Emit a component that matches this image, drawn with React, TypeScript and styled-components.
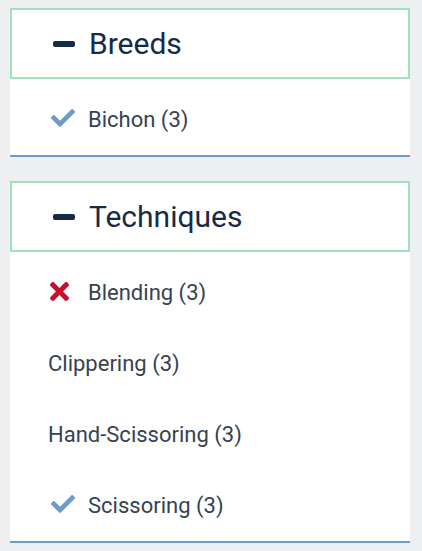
import React from 'react';
import styled, { createGlobalStyle } from 'styled-components';

const GlobalStyle = createGlobalStyle`
  html, body {
    margin: 0;
    padding: 0;
    background: #eeeff1;
    font-family: Roboto, 'Liberation Sans', sans-serif;
  }
`;

type Mark = 'check' | 'cross' | undefined;

type Facet = {
  label: string;
  count: number;
  mark?: Mark;
};

type Group = {
  title: string;
  facets: Facet[];
};

const groups: Group[] = [
  {
    title: 'Breeds',
    facets: [{ label: 'Bichon', count: 3, mark: 'check' }],
  },
  {
    title: 'Techniques',
    facets: [
      { label: 'Blending', count: 3, mark: 'cross' },
      { label: 'Clippering', count: 3 },
      { label: 'Hand-Scissoring', count: 3 },
      { label: 'Scissoring', count: 3, mark: 'check' },
    ],
  },
];

const Page = styled.div`
  width: 400px;
  padding: 8px 12px 0 10px;
  display: flex;
  flex-direction: column;
  gap: 24px;
`;

const Section = styled.section`
  background: #ffffff;
  border-bottom: 2px solid #6e9ccb;
`;

const Header = styled.button`
  box-sizing: border-box;
  width: 100%;
  height: 71px;
  margin: 0;
  padding: 0 0 0 41px;
  display: flex;
  align-items: center;
  gap: 14px;
  background: #ffffff;
  border: 2px solid #a0e2be;
  font-family: Roboto, 'Liberation Sans', sans-serif;
  font-size: 30px;
  font-weight: 400;
  color: #172a46;
  cursor: pointer;
  text-align: left;
`;

const Minus = styled.span`
  display: block;
  width: 22px;
  height: 6px;
  border-radius: 2px;
  background: #172a46;
  margin-top: 1px;
`;

const List = styled.ul`
  list-style: none;
  margin: 0;
  padding: 5px 0 0 38px;
`;

const Item = styled.li`
  height: 71px;
  display: flex;
  align-items: center;
  font-size: 22px;
  color: #364252;
`;

const IconSlot = styled.span<{ $offset: number }>`
  width: 40px;
  flex: none;
  display: flex;
  align-items: center;
  padding-left: ${(p) => p.$offset}px;
  box-sizing: border-box;
  margin-top: -3px;
`;

const CheckIcon = () => (
  <svg width="24" height="18" viewBox="0 64 512 384" fill="#6e9bc8">
    <path d="M173.898 439.404l-166.4-166.4c-9.997-9.997-9.997-26.206 0-36.204l36.203-36.204c9.997-9.998 26.207-9.998 36.204 0L192 312.69 432.095 72.596c9.997-9.997 26.207-9.997 36.204 0l36.203 36.204c9.997 9.997 9.997 26.206 0 36.204l-294.4 294.401c-9.998 9.997-26.207 9.997-36.204-.001z" />
  </svg>
);

const CrossIcon = () => (
  <svg width="19" height="19" viewBox="0 80 352 352" fill="#c8102e">
    <path d="M242.72 256l100.07-100.07c12.28-12.28 12.28-32.19 0-44.48l-22.24-22.24c-12.28-12.28-32.19-12.28-44.48 0L176 189.28 75.93 89.21c-12.28-12.28-32.19-12.28-44.48 0L9.21 111.45c-12.28 12.28-12.28 32.19 0 44.48L109.28 256 9.21 356.07c-12.28 12.28-12.28 32.19 0 44.48l22.24 22.24c12.28 12.28 32.2 12.28 44.48 0L176 322.72l100.07 100.07c12.28 12.28 32.2 12.28 44.48 0l22.24-22.24c12.28-12.28 12.28-32.19 0-44.48L242.72 256z" />
  </svg>
);

const FacetRow: React.FC<{ facet: Facet }> = ({ facet }) => (
  <Item>
    {facet.mark && (
      <IconSlot $offset={facet.mark === 'check' ? 3 : 2}>
        {facet.mark === 'check' ? <CheckIcon /> : <CrossIcon />}
      </IconSlot>
    )}
    <span>
      {facet.label} ({facet.count})
    </span>
  </Item>
);

const App: React.FC = () => {
  return (
    <>
      <GlobalStyle />
      <Page>
        {groups.map((group) => (
          <Section key={group.title}>
            <Header type="button">
              <Minus />
              {group.title}
            </Header>
            <List>
              {group.facets.map((facet) => (
                <FacetRow key={facet.label} facet={facet} />
              ))}
            </List>
          </Section>
        ))}
      </Page>
    </>
  );
};

export default App;
